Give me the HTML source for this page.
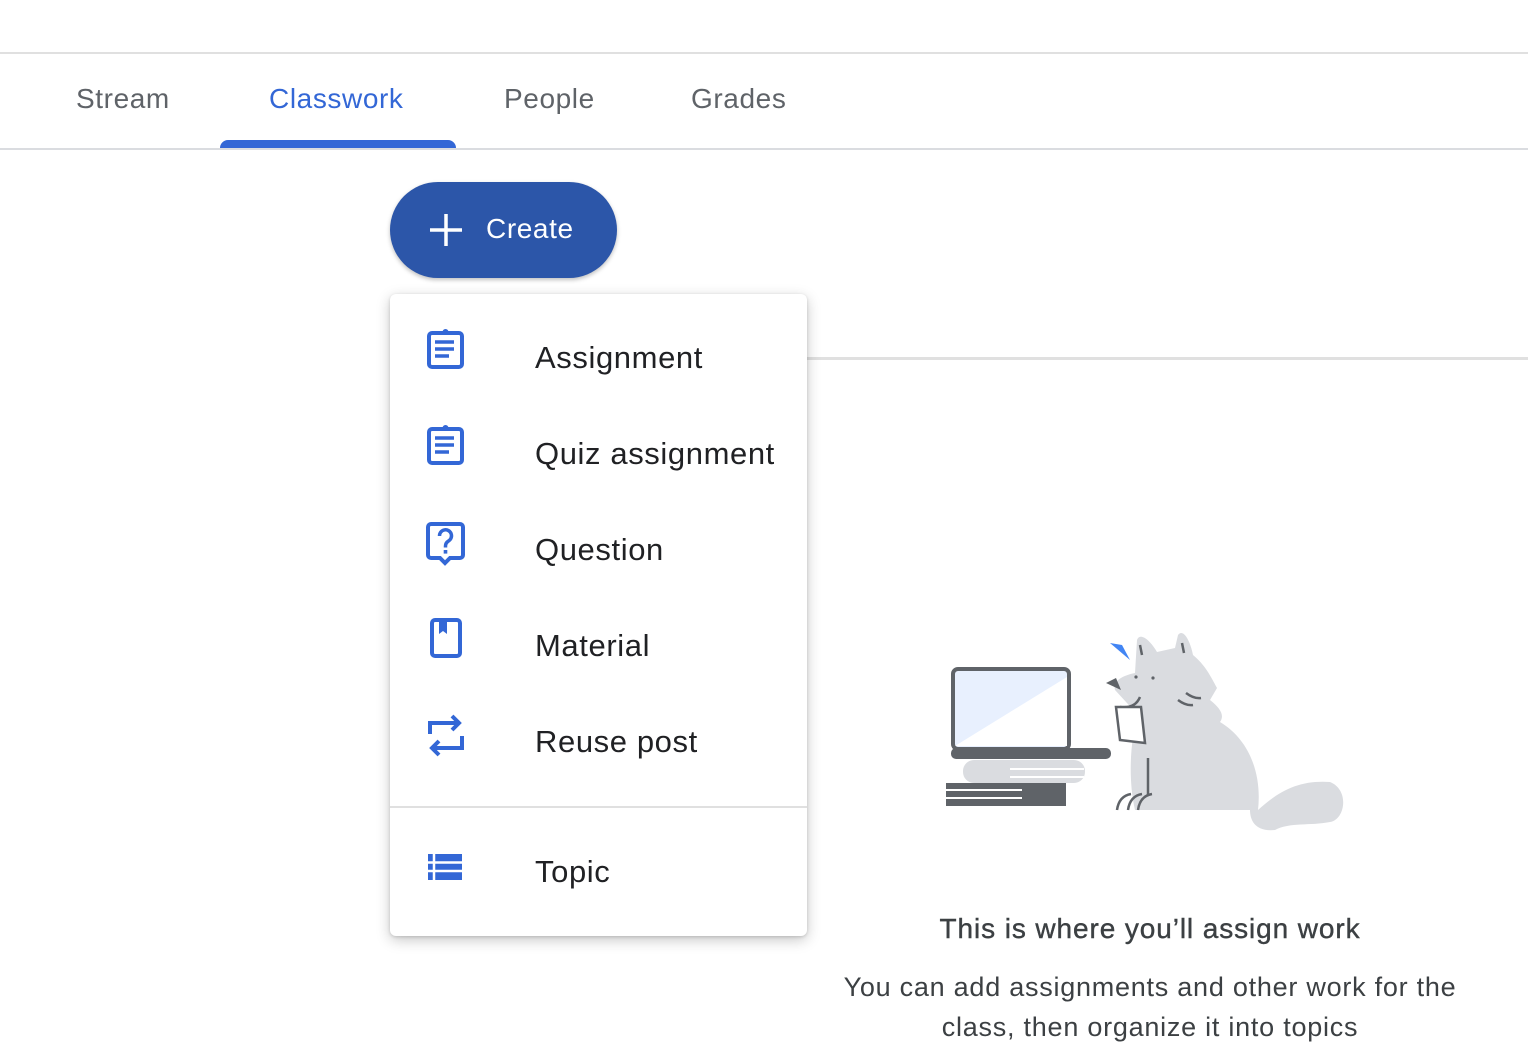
<!DOCTYPE html>
<html><head><meta charset="utf-8"><style>
body{margin:0;width:1528px;height:1042px;background:#fff;font-family:"Liberation Sans",Arial,sans-serif;position:relative;overflow:hidden}
.topline{position:absolute;left:0;right:0;top:52px;height:2px;background:#e0e0e0}
.tabs{position:absolute;left:0;right:0;top:54px;height:94px;border-bottom:2px solid #dadce0}
.tab{position:absolute;top:29px;font-size:28px;letter-spacing:0.6px;color:#5f6368}
.tab.active{color:#3367d6}
.ind{position:absolute;left:220px;width:236px;top:140px;height:8px;background:#3367d6;border-radius:8px 8px 0 0}
.create{position:absolute;left:390px;top:182px;width:227px;height:96px;border-radius:48px;background:#2c56a9;color:#fff;font-size:28px;letter-spacing:0.6px;box-shadow:0 2px 4px rgba(0,0,0,.25)}
.create span{position:absolute;left:96px;top:31px}
.sep{position:absolute;left:806px;right:0;top:357px;height:3px;background:#e0e0e0}
.menu{position:absolute;left:390px;top:294px;width:417px;height:642px;background:#fff;border-radius:6px;box-shadow:0 4px 14px rgba(0,0,0,.22),0 1px 3px rgba(0,0,0,.15)}
.item{position:absolute;left:145px;font-size:31px;letter-spacing:0.6px;color:#202124}
.ic{position:absolute;left:36px}
.msep{position:absolute;left:0;right:0;top:512px;height:2px;background:#e0e0e0}
.t1{position:absolute;left:790px;width:720px;text-align:center;top:913px;font-size:28px;letter-spacing:0.9px;color:#3c4043;-webkit-text-stroke:0.4px #3c4043}
.t2{position:absolute;left:790px;width:720px;text-align:center;top:967px;font-size:27px;line-height:40px;letter-spacing:0.75px;color:#3c4043}
</style></head><body>
<div class="topline"></div>
<div class="tabs">
<div class="tab" style="left:76px">Stream</div>
<div class="tab active" style="left:269px">Classwork</div>
<div class="tab" style="left:504px">People</div>
<div class="tab" style="left:691px">Grades</div>
</div>
<div class="ind"></div>
<div class="create"><svg style="position:absolute;left:40px;top:32px" width="32" height="32"><path d="M16 0v32M0 16h32" stroke="#fff" stroke-width="3.5"/></svg><span>Create</span></div>
<div class="sep"></div>
<div class="menu">
<svg class="ic" style="top:34px" width="40" height="42" viewBox="0 0 40 42"><rect x="3" y="5" width="33" height="34" rx="3" fill="none" stroke="#3367d6" stroke-width="4"/><circle cx="19.5" cy="4" r="3" fill="#3367d6"/><path d="M9 14h19M9 21h19M9 28h14" stroke="#3367d6" stroke-width="3.5"/></svg>
<div class="item" style="top:46px">Assignment</div>
<svg class="ic" style="top:130px" width="40" height="42" viewBox="0 0 40 42"><rect x="3" y="5" width="33" height="34" rx="3" fill="none" stroke="#3367d6" stroke-width="4"/><circle cx="19.5" cy="4" r="3" fill="#3367d6"/><path d="M9 14h19M9 21h19M9 28h14" stroke="#3367d6" stroke-width="3.5"/></svg>
<div class="item" style="top:142px">Quiz assignment</div>
<svg class="ic" style="top:228px" width="40" height="46" viewBox="0 0 40 46"><path d="M5 2h29a3 3 0 0 1 3 3v28a3 3 0 0 1-3 3h-10l-5 5-5-5H5a3 3 0 0 1-3-3V5a3 3 0 0 1 3-3z" fill="none" stroke="#3367d6" stroke-width="4"/><path d="M13.5 14a6 6 0 1 1 9 5c-2 1.3-3 2.5-3 5v1.5" fill="none" stroke="#3367d6" stroke-width="3.5"/><rect x="17.7" y="28" width="3.6" height="3.6" fill="#3367d6"/></svg>
<div class="item" style="top:238px">Question</div>
<svg class="ic" style="top:324px" width="40" height="42" viewBox="0 0 40 42"><rect x="6" y="2" width="28" height="36" rx="3" fill="none" stroke="#3367d6" stroke-width="4"/><path d="M13 3h8v13l-4-3-4 3z" fill="#3367d6"/></svg>
<div class="item" style="top:334px">Material</div>
<svg class="ic" style="top:420px" width="40" height="44" viewBox="0 0 40 44"><path d="M4 20V9h28M26 2l7 7-7 7M36 22v12H6M13 27l-7 7 7 7" fill="none" stroke="#3367d6" stroke-width="4"/></svg>
<div class="item" style="top:430px">Reuse post</div>
<div class="msep"></div>
<svg class="ic" style="top:558px" width="40" height="30" viewBox="0 0 40 30"><rect x="2" y="2" width="34" height="26" fill="#3367d6"/><path d="M2 10.5h34M2 19h34M8 2v26" stroke="#fff" stroke-width="2.5"/></svg>
<div class="item" style="top:560px">Topic</div>
</div>
<svg style="position:absolute;left:0;top:0" width="1528" height="1042">
<rect x="953" y="669" width="116" height="80" rx="5" fill="#e8f0fe" stroke="#5f6368" stroke-width="4"/>
<path d="M955 746L1067 677V746Z" fill="#fff"/>
<rect x="951" y="748" width="160" height="11" rx="5" fill="#5f6368"/>
<rect x="963" y="760" width="122" height="23" rx="11" fill="#dadce0"/>
<path d="M1010 769h74M1010 777h74" stroke="#fff" stroke-width="2"/>
<rect x="946" y="783" width="120" height="23" fill="#5f6368"/>
<path d="M946 790h76M946 798h76" stroke="#fff" stroke-width="2"/>
<path d="M1135 810 C1128 780 1130 740 1138 715 L1115 690 C1112 680 1125 675 1135 673 L1137 640 C1140 632 1150 640 1157 652 L1175 648 L1178 635 C1183 628 1190 640 1193 655 C1205 665 1210 675 1217 688 L1210 700 C1220 708 1225 715 1220 722 C1250 740 1262 775 1258 810 C1280 790 1300 780 1330 782 C1350 790 1345 820 1330 822 C1310 826 1290 822 1275 830 C1255 832 1250 820 1250 810 Z" fill="#dadce0"/>
<path d="M1117 810q2-14 14-16M1128 810q2-14 14-16M1138 810q2-14 14-16" stroke="#5f6368" stroke-width="2.5" fill="none"/>
<path d="M1148 758v38" stroke="#5f6368" stroke-width="2.5"/>
<path d="M1106 683l10-5 5 12z" fill="#5f6368"/>
<path d="M1140 697q-5 12-20 10" stroke="#5f6368" stroke-width="2.5" fill="none"/>
<path d="M1116 707l25 0 4 36-25-3z" fill="#fff" stroke="#5f6368" stroke-width="2.5"/>
<path d="M1110 643l12 2 8 15z" fill="#4285f4"/>
<path d="M1140 645l2 10M1182 643l2 10" stroke="#5f6368" stroke-width="2.5"/>
<circle cx="1136" cy="677" r="1.6" fill="#5f6368"/><circle cx="1153" cy="678" r="1.6" fill="#5f6368"/>
<path d="M1178 700q8 6 15 5M1186 693q8 6 15 5" stroke="#5f6368" stroke-width="2.5" fill="none"/>
</svg>
<div class="t1">This is where you’ll assign work</div>
<div class="t2">You can add assignments and other work for the<br>class, then organize it into topics</div>
</body></html>
